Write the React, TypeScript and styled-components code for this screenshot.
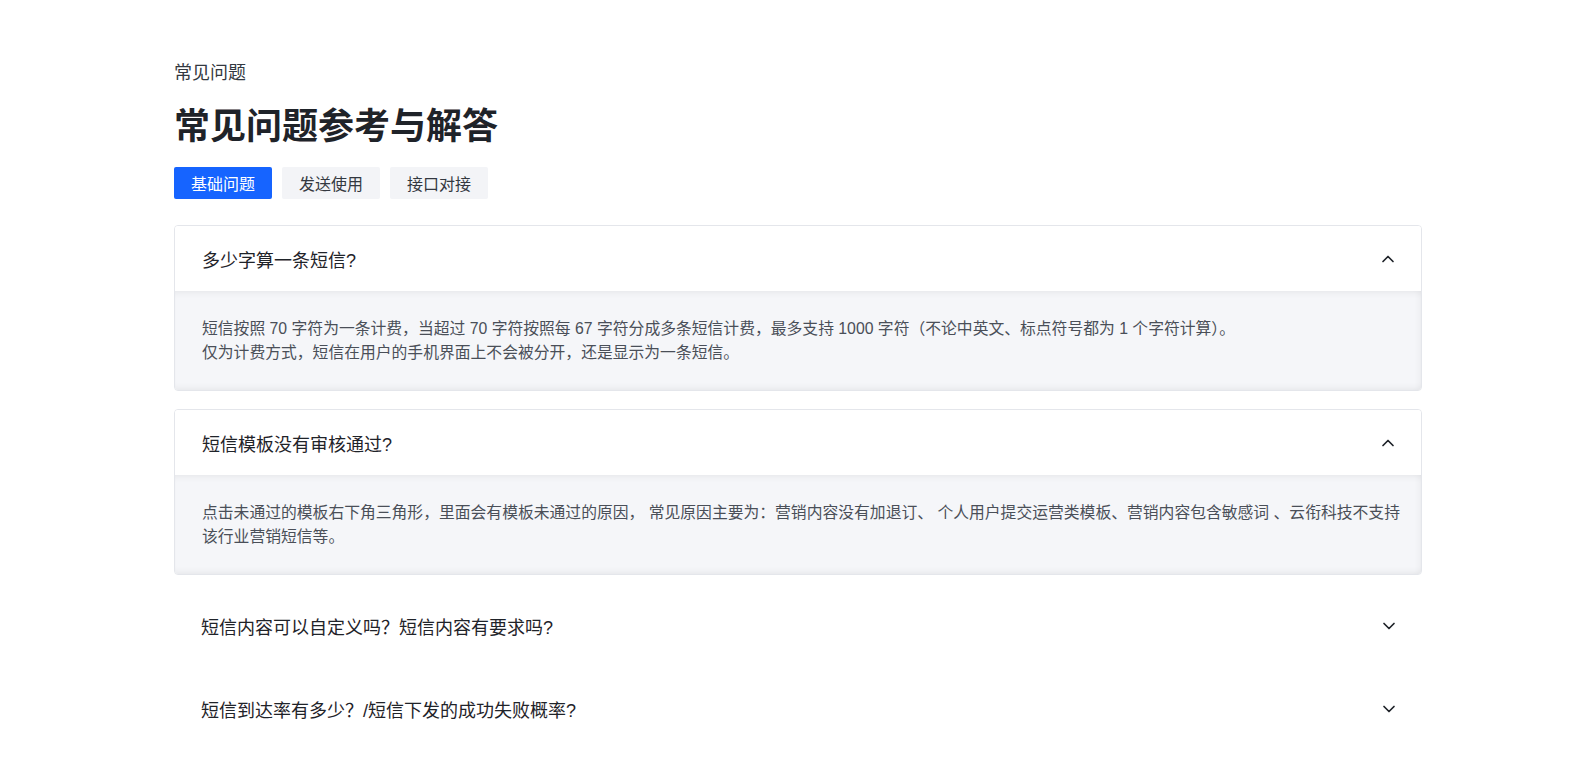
import React, { useState } from "react";
import styled, { createGlobalStyle } from "styled-components";

const GlobalStyle = createGlobalStyle`
  html, body {
    margin: 0;
    padding: 0;
    background: #ffffff;
    font-family: "Liberation Sans", "Noto Sans CJK SC", sans-serif;
    color: #1f2329;
    overflow: hidden;
  }
  * { box-sizing: border-box; }
`;

const Page = styled.div`
  width: 1248px;
  margin: 0 0 0 174px;
  padding-top: 61px;
`;

const Crumb = styled.div`
  font-size: 18px;
  line-height: 24px;
  color: #333840;
`;

const Title = styled.h1`
  margin: 18px 0 0;
  font-size: 36px;
  line-height: 48px;
  font-weight: 700;
  color: #1f2329;
`;

const Tabs = styled.div`
  display: flex;
  gap: 10px;
  margin-top: 16px;
`;

const Tab = styled.button<{ $active?: boolean }>`
  width: 98px;
  height: 32px;
  padding: 0;
  border: none;
  border-radius: 2px;
  font-family: inherit;
  font-size: 16px;
  cursor: pointer;
  background: ${(p) => (p.$active ? "#1664ff" : "#f3f4f7")};
  color: ${(p) => (p.$active ? "#ffffff" : "#333840")};
`;

const List = styled.div`
  display: flex;
  flex-direction: column;
  gap: 18px;
  margin-top: 26px;
`;

const Item = styled.div<{ $open: boolean }>`
  border: ${(p) => (p.$open ? "1px solid #e4e6eb" : "none")};
  border-radius: 4px;
  overflow: hidden;
`;

const Header = styled.div`
  height: 65px;
  padding: 0 26px 0 27px;
  display: flex;
  align-items: center;
  justify-content: space-between;
  font-size: 18px;
  color: #1f2329;
  cursor: pointer;
  background: #ffffff;
`;

const Body = styled.div`
  background: #f5f6f9;
  padding: 26px 12px 25px 27px;
  font-size: 15.8px;
  line-height: 24px;
  color: #4a4f58;
  box-shadow: inset 0 6px 6px -4px rgba(0, 0, 0, 0.06),
    inset -6px 0 6px -4px rgba(0, 0, 0, 0.04),
    inset 0 -6px 6px -4px rgba(0, 0, 0, 0.06);
`;

const Chevron = ({ up }: { up: boolean }) => (
  <svg width="14" height="14" viewBox="0 0 14 14" fill="none">
    <path
      d={up ? "M2 9.5L7 4.5L12 9.5" : "M2 4.5L7 9.5L12 4.5"}
      stroke="#1f2329"
      strokeWidth="1.7"
      strokeLinecap="round"
      strokeLinejoin="round"
    />
  </svg>
);

const faqs = [
  {
    q: "多少字算一条短信?",
    a: [
      "短信按照 70 字符为一条计费，当超过 70 字符按照每 67 字符分成多条短信计费，最多支持 1000 字符（不论中英文、标点符号都为 1 个字符计算）。",
      "仅为计费方式，短信在用户的手机界面上不会被分开，还是显示为一条短信。",
    ],
  },
  {
    q: "短信模板没有审核通过?",
    a: [
      "点击未通过的模板右下角三角形，里面会有模板未通过的原因， 常见原因主要为：营销内容没有加退订、 个人用户提交运营类模板、营销内容包含敏感词 、云衔科技不支持该行业营销短信等。",
    ],
  },
  {
    q: "短信内容可以自定义吗？短信内容有要求吗?",
    a: ["短信内容可以自定义，需符合短信模板规范。"],
  },
  {
    q: "短信到达率有多少？/短信下发的成功失败概率?",
    a: ["短信到达率受运营商、号码状态等因素影响。"],
  },
];

const App: React.FC = () => {
  const [open, setOpen] = useState<boolean[]>([true, true, false, false]);
  const toggle = (i: number) =>
    setOpen((s) => s.map((v, j) => (j === i ? !v : v)));

  return (
    <>
      <GlobalStyle />
      <Page>
        <Crumb>常见问题</Crumb>
        <Title>常见问题参考与解答</Title>
        <Tabs>
          <Tab $active>基础问题</Tab>
          <Tab>发送使用</Tab>
          <Tab>接口对接</Tab>
        </Tabs>
        <List>
          {faqs.map((f, i) => (
            <Item key={f.q} $open={open[i]}>
              <Header onClick={() => toggle(i)}>
                <span>{f.q}</span>
                <Chevron up={open[i]} />
              </Header>
              {open[i] && (
                <Body>
                  {f.a.map((line) => (
                    <div key={line}>{line}</div>
                  ))}
                </Body>
              )}
            </Item>
          ))}
        </List>
      </Page>
    </>
  );
};

export default App;
